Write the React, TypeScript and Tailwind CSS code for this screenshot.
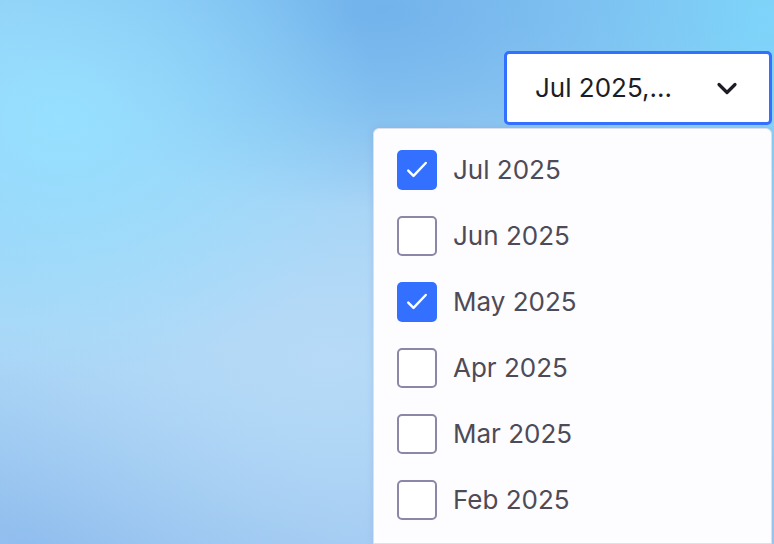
import { useState } from "react";

const MONTHS = ["Jul 2025", "Jun 2025", "May 2025", "Apr 2025", "Mar 2025", "Feb 2025"];

function CheckBox({ checked }: { checked: boolean }) {
    return checked ? (
        <div className="w-[40px] h-[40px] rounded-[5px] bg-[#3370ff] flex items-center justify-center shrink-0">
            <svg width="28" height="28" viewBox="0 0 24 24" fill="none" stroke="white" strokeWidth="2.1" strokeLinecap="round" strokeLinejoin="round">
                <path d="M4.5 12.5l4.5 4.5L19.5 6" />
            </svg>
        </div>
    ) : (
        <div className="w-[40px] h-[40px] rounded-[5px] border-2 border-[#8c87a6] bg-white shrink-0" />
    );
}

export default function App() {
    const [selected, setSelected] = useState<string[]>(["Jul 2025", "May 2025"]);

    const toggle = (m: string) =>
        setSelected((s) => (s.includes(m) ? s.filter((x) => x !== m) : [...s, m]));

    return (
        <div
            className="w-full h-[544px] overflow-hidden flex flex-col items-end pt-[51px] pr-[2px] font-['Inter',sans-serif]"
            style={{
                background:
                    "radial-gradient(ellipse 320px 260px at 60px 120px, #97e0ff 0%, rgba(151,224,255,0) 100%), radial-gradient(ellipse 380px 200px at 380px 10px, #72b3ec 0%, rgba(114,179,236,0) 100%), radial-gradient(ellipse 300px 220px at 760px 20px, #7dd4fa 0%, rgba(125,212,250,0) 100%), radial-gradient(ellipse 420px 260px at 330px 360px, #b6daf7 0%, rgba(182,218,247,0) 100%), radial-gradient(ellipse 320px 200px at 40px 560px, #8fbdee 0%, rgba(143,189,238,0) 100%), linear-gradient(180deg, #8cc8f2 0%, #a9d6f6 60%, #9fc8f1 100%)",
            }}
        >
            <button className="w-[268px] h-[74px] bg-white border-[3px] border-[#3370ff] rounded-[5px] flex items-center justify-between pl-[28px] pr-[30px] cursor-pointer">
                <span className="text-[26px] text-[#1d1d26] leading-none">Jul 2025,...</span>
                <svg width="24" height="24" viewBox="0 0 24 24" fill="none" stroke="#1d1d26" strokeWidth="3.2" strokeLinecap="round" strokeLinejoin="round">
                    <path d="M4 8.5l8 8 8-8" />
                </svg>
            </button>
            <div className="mt-[3px] w-[399px] flex-1 bg-[#fdfcfe] border border-[#dcdfee] rounded-tl-[6px] rounded-tr-[6px] shadow-[0_0_6px_rgba(120,140,200,0.25)] flex flex-col gap-[26px] pt-[21px] pl-[23px]">
                {MONTHS.map((m) => (
                    <div key={m} className="flex items-center gap-[16px] h-[40px] cursor-pointer" onClick={() => toggle(m)}>
                        <CheckBox checked={selected.includes(m)} />
                        <span className="text-[26px] text-[#4d4b58] leading-none">{m}</span>
                    </div>
                ))}
            </div>
        </div>
    );
}
